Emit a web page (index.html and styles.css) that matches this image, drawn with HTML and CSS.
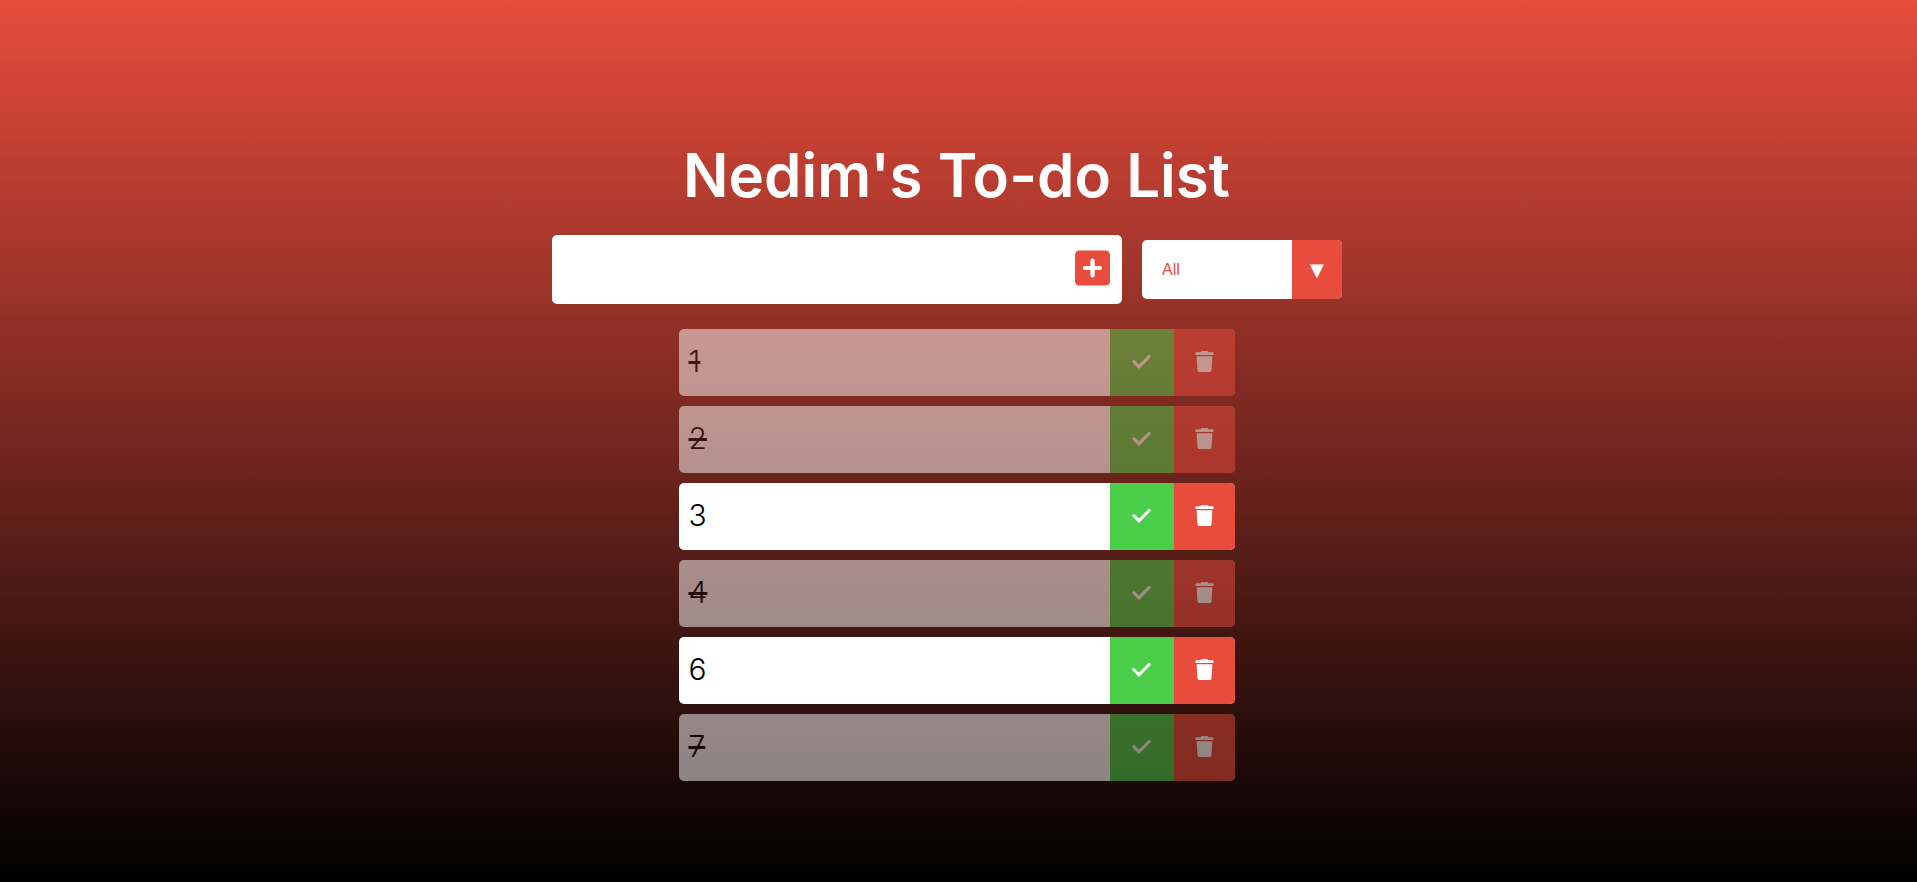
FILE: index.html
```html
<!DOCTYPE html>
<html lang="en">
<head>
<meta charset="utf-8">
<meta name="viewport" content="width=device-width, initial-scale=1">
<title>Nedim's To-do List</title>
<link rel="stylesheet" href="styles.css">
</head>
<body>
<svg class="sprite" aria-hidden="true">
  <symbol id="plus" viewBox="0 0 448 512"><rect y="32" width="448" height="448" rx="56"/><path d="M224 160v192M128 256h192" fill="none" stroke="#fff" stroke-width="54" stroke-linecap="round"/></symbol>
  <symbol id="check" viewBox="0 0 448 512"><path d="M38 262l122 122 250-250" fill="none" stroke="currentColor" stroke-width="76" stroke-linecap="round"/></symbol>
  <symbol id="trash" viewBox="0 0 448 512"><path d="M135.200 17.700L128 32H32C14.300 32 0 46.300 0 64S14.300 96 32 96H416c17.700 0 32-14.300 32-32s-14.300-32-32-32H320l-7.200-14.300C307.400 6.800 296.300 0 284.200 0H163.800c-12.100 0-23.200 6.800-28.600 17.700zM416 128H32L53.200 467c1.600 25.300 22.600 45 47.900 45H346.900c25.300 0 46.300-19.700 47.900-45L416 128z"/></symbol>
</svg>
<header class="header"><h1 class="title">Nedim's To-do List</h1></header>
<main>
  <form class="todo-form">
    <div class="entry">
      <input class="todo-input" type="text" aria-label="New task">
      <button class="todo-button" type="button" aria-label="Add task"><svg class="icon icon-plus"><use href="#plus"/></svg></button>
    </div>
    <div class="select">
      <select class="filter-todo" name="todos" aria-label="Filter tasks">
        <option value="all">All</option>
        <option value="completed">Completed</option>
        <option value="uncompleted">Uncompleted</option>
      </select>
    </div>
  </form>
  <ul class="todo-list">
    <li class="todo completed"><span class="todo-item">1</span><button class="complete-btn" type="button" aria-label="Complete"><svg class="icon"><use href="#check"/></svg></button><button class="trash-btn" type="button" aria-label="Delete"><svg class="icon"><use href="#trash"/></svg></button></li>
    <li class="todo completed"><span class="todo-item">2</span><button class="complete-btn" type="button" aria-label="Complete"><svg class="icon"><use href="#check"/></svg></button><button class="trash-btn" type="button" aria-label="Delete"><svg class="icon"><use href="#trash"/></svg></button></li>
    <li class="todo"><span class="todo-item">3</span><button class="complete-btn" type="button" aria-label="Complete"><svg class="icon"><use href="#check"/></svg></button><button class="trash-btn" type="button" aria-label="Delete"><svg class="icon"><use href="#trash"/></svg></button></li>
    <li class="todo completed"><span class="todo-item">4</span><button class="complete-btn" type="button" aria-label="Complete"><svg class="icon"><use href="#check"/></svg></button><button class="trash-btn" type="button" aria-label="Delete"><svg class="icon"><use href="#trash"/></svg></button></li>
    <li class="todo"><span class="todo-item">6</span><button class="complete-btn" type="button" aria-label="Complete"><svg class="icon"><use href="#check"/></svg></button><button class="trash-btn" type="button" aria-label="Delete"><svg class="icon"><use href="#trash"/></svg></button></li>
    <li class="todo completed"><span class="todo-item">7</span><button class="complete-btn" type="button" aria-label="Complete"><svg class="icon"><use href="#check"/></svg></button><button class="trash-btn" type="button" aria-label="Delete"><svg class="icon"><use href="#trash"/></svg></button></li>
  </ul>
</main>
</body>
</html>
```
FILE: styles.css
```css
* {
  box-sizing: border-box;
  margin: 0;
  padding: 0;
}

body {
  min-height: 100vh;
  padding-top: 130px;
  background: linear-gradient(#e74c3c, #000);
  color: #fff;
  font-family: Inter, "Liberation Sans", sans-serif;
}

.sprite {
  display: none;
}

.header {
  display: flex;
  justify-content: center;
  height: 105px;
  padding-right: 4px;
}

.title {
  font-size: 60px;
  line-height: 90px;
  font-weight: 600;
}

.todo-form {
  display: flex;
  justify-content: center;
  align-items: center;
  gap: 20px;
  padding-right: 23px;
}

.entry {
  display: flex;
  align-items: center;
  width: 570px;
  height: 69px;
  padding-right: 12px;
  border-radius: 5px;
  background: #fff;
}

.todo-input {
  flex: 1;
  min-width: 0;
  height: 100%;
  padding: 0 10px;
  border: none;
  outline: none;
  background: none;
  font: 30px Inter, sans-serif;
}

.todo-button {
  display: flex;
  padding-bottom: 3px;
  border: none;
  background: none;
  color: #e74c3c;
  cursor: pointer;
}

.icon {
  width: 19px;
  height: 21px;
  fill: currentColor;
}

.icon-plus {
  width: 35px;
  height: 40px;
}

.select {
  display: flex;
  position: relative;
  width: 200px;
  border-radius: 5px;
  overflow: hidden;
}

.select::after {
  content: "\25BC";
  position: absolute;
  inset: 0 0 0 auto;
  width: 50px;
  background: #e74c3c;
  font-family: "DejaVu Sans", sans-serif;
  font-size: 18px;
  line-height: 59px;
  text-align: center;
  pointer-events: none;
}

.filter-todo {
  width: 100%;
  height: 59px;
  padding: 0 20px;
  border: none;
  appearance: none;
  background: #fff;
  color: #e74c3c;
  font: 16px "Liberation Sans", sans-serif;
  cursor: pointer;
}

.todo-list {
  padding-right: 4px;
  display: flex;
  flex-direction: column;
  gap: 10px;
  width: 560px;
  margin: 25px auto 0;
  list-style: none;
}

.todo {
  display: flex;
  height: 67px;
  border-radius: 5px;
  overflow: hidden;
  background: #fff;
  color: #000;
}

.todo-item {
  flex: 1;
  padding: 0 10px;
  font-size: 30px;
  line-height: 65px;
  font-weight: 300;
}

.complete-btn,
.trash-btn {
  display: flex;
  justify-content: center;
  align-items: center;
  padding-bottom: 2px;
  border: none;
  color: #fff;
  cursor: pointer;
}

.complete-btn {
  width: 64px;
  background: #4bcf4b;
}

.trash-btn {
  width: 61px;
  background: #e74c3c;
}

.completed {
  opacity: .5;
}

.completed .todo-item {
  text-decoration: line-through;
}
```
